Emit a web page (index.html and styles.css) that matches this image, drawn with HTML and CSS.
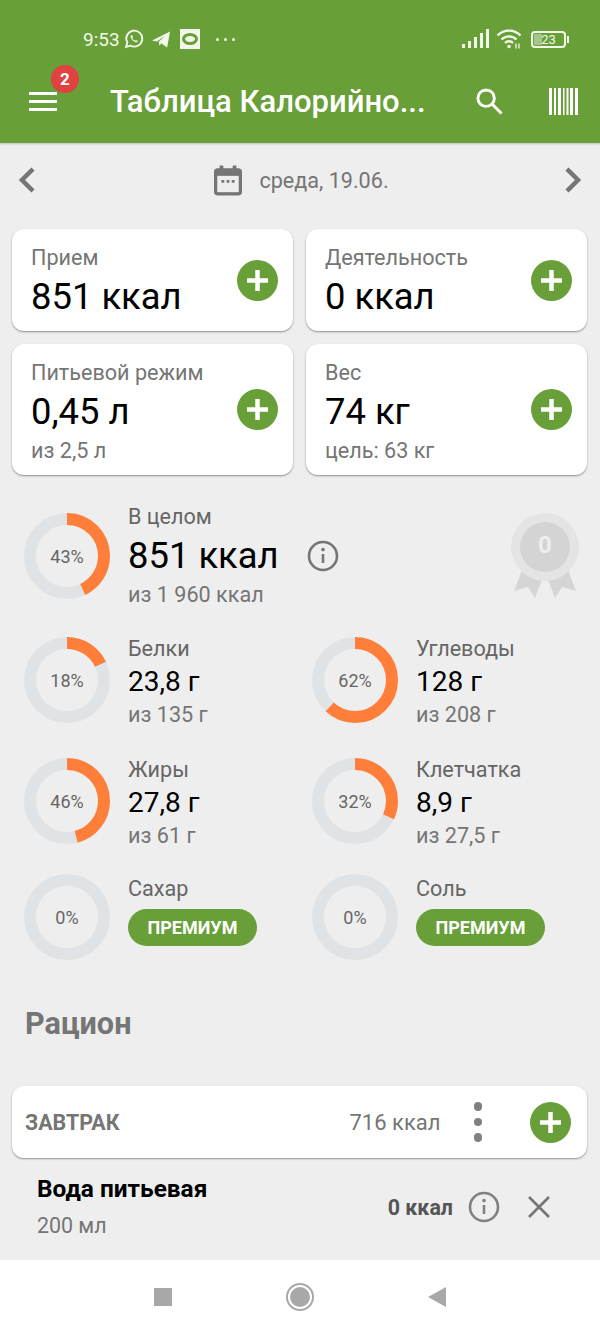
FILE: index.html
```html
<!DOCTYPE html>
<html lang="ru">

<head>
  <meta charset="utf-8">
  <title>Таблица Калорийности</title>
  <link rel="stylesheet" href="styles.css">
</head>

<body>
  <svg class="defs" width="0" height="0">
    <symbol id="plus" viewBox="0 0 41 41">
      <circle cx="20.5" cy="20.5" r="20.5" fill="#689f38" />
      <path d="M20.5 10v21M10 20.5h21" stroke="#fff" stroke-width="4.5" />
    </symbol>
    <symbol id="info" viewBox="0 0 32 32">
      <circle cx="16" cy="16" r="14" fill="none" stroke="currentColor" stroke-width="2.6" />
      <path d="M16 14v9" stroke="currentColor" stroke-width="2.6" />
      <circle cx="16" cy="9.6" r="1.8" fill="currentColor" />
    </symbol>
  </svg>

  <div class="screen">
    <header class="top">
      <div class="status">
        <span class="clock">9:53</span>
        <svg class="st-whatsapp" width="20" height="20" viewBox="0 0 24 24" fill="none" stroke="#f1f8e9" stroke-width="2.2">
          <path d="M2.5 21.5l1.5-5.2A9.6 9.6 0 1 1 7.8 20z" />
          <path d="M8.5 7.5c-1 1-.8 2.6.6 4.6s3.4 3.6 5.2 3.8c1.2.1 2-.6 2.2-1.6l-2.2-1.2-1 1c-1.400-.6-2.600-1.800-3.300-3.300l.9-1-1-2.400z" fill="#f1f8e9" stroke="none" />
        </svg>
        <svg class="st-telegram" width="19" height="17" viewBox="0 0 20 18">
          <path d="M0 10L19 .5 16 17.500 9.500 13 8 15.500 7 11.500 14 5 5 11z" fill="#f1f8e9" />
        </svg>
        <svg class="st-square" width="20" height="20" viewBox="0 0 20 20">
          <rect width="20" height="20" fill="#f1f8e9" />
          <ellipse cx="10" cy="10" rx="6.500" ry="4.500" fill="none" stroke="#689f38" stroke-width="3" />
        </svg>
        <span class="st-dots"><i></i><i></i><i></i></span>
        <span class="grow"></span>
        <svg width="27" height="20" viewBox="0 0 27 20" fill="#f1f8e9">
          <rect x="0" y="15" width="3" height="4" />
          <rect x="6" y="12" width="3" height="7" />
          <rect x="12" y="8" width="3" height="11" />
          <rect x="18" y="4" width="3" height="15" />
          <rect x="24" y="0" width="3" height="19" />
        </svg>
        <svg class="st-wifi" width="26" height="20" viewBox="0 0 26 20" fill="none" stroke="#f1f8e9" stroke-width="2.400">
          <path d="M1.500 6.500a16 16 0 0 1 23 0M5.500 10.500a10.500 10.500 0 0 1 15 0M9 14a5.500 5.500 0 0 1 8 0" />
          <circle cx="13" cy="17.500" r="1.800" fill="#f1f8e9" stroke="none" />
          <path d="M20 14.500v5M23 14.500v5" stroke-width="1.300" />
        </svg>
        <span class="battery"><span class="battery-fill"></span><span class="battery-num">23</span></span>
      </div>
      <div class="appbar">
        <button class="menu">
          <span class="menu-lines"><i></i><i></i><i></i></span>
          <span class="badge">2</span>
        </button>
        <h1 class="title">Таблица Калорийно...</h1>
        <svg class="search" width="27" height="27" viewBox="0 0 28 28" fill="none" stroke="#fff" stroke-width="3">
          <circle cx="10.500" cy="10.500" r="8.500" />
          <path d="M17 17l9.500 9.500" />
        </svg>
        <svg class="barcode" width="29" height="27" viewBox="0 0 29 27" fill="#fff">
          <rect x="0" width="3" height="27" />
          <rect x="5" width="2" height="27" />
          <rect x="9" width="3" height="27" />
          <rect x="14" width="1.500" height="27" />
          <rect x="17.500" width="2" height="27" />
          <rect x="21" width="3" height="27" />
          <rect x="26" width="3" height="27" />
        </svg>
      </div>
    </header>

    <main class="content">
      <div class="datebar">
        <svg width="18" height="28" viewBox="0 0 18 28" fill="none" stroke="#757575" stroke-width="4.500">
          <path d="M15 3L4 14l11 11" />
        </svg>
        <div class="date">
          <svg width="28" height="31" viewBox="0 0 30 32">
            <path d="M6 0h4v3h10V0h4v3h2a4 4 0 0 1 4 4v21a4 4 0 0 1-4 4H4a4 4 0 0 1-4-4V7a4 4 0 0 1 4-4h2z" fill="#757575" />
            <rect x="3.500" y="11" width="23" height="17.500" fill="#eee" />
            <path d="M8 15.500h3v3H8zM13.500 15.500h3v3h-3zM19 15.500h3v3h-3z" fill="#757575" />
          </svg>
          <span>среда, 19.06.</span>
        </div>
        <svg width="18" height="28" viewBox="0 0 18 28" fill="none" stroke="#757575" stroke-width="4.500">
          <path d="M3 3l11 11L3 25" />
        </svg>
      </div>

      <section class="cards">
        <div class="card card-short">
          <div class="card-text">
            <div class="card-label">Прием</div>
            <div class="card-value">851 ккал</div>
          </div>
          <svg class="add"><use href="#plus" /></svg>
        </div>
        <div class="card card-short">
          <div class="card-text">
            <div class="card-label">Деятельность</div>
            <div class="card-value">0 ккал</div>
          </div>
          <svg class="add"><use href="#plus" /></svg>
        </div>
        <div class="card card-tall">
          <div class="card-text">
            <div class="card-label">Питьевой режим</div>
            <div class="card-value">0,45 л</div>
            <div class="card-sub">из 2,5 л</div>
          </div>
          <svg class="add"><use href="#plus" /></svg>
        </div>
        <div class="card card-tall">
          <div class="card-text">
            <div class="card-label">Вес</div>
            <div class="card-value">74 кг</div>
            <div class="card-sub">цель: 63 кг</div>
          </div>
          <svg class="add"><use href="#plus" /></svg>
        </div>
      </section>

      <section class="total">
        <div class="ring">
          <svg viewBox="0 0 86 86"><circle class="ring-bg" cx="43" cy="43" r="37" /><circle class="ring-fg" cx="43" cy="43" r="37" pathLength="100" stroke-dasharray="43 100" /></svg>
          <span class="ring-num">43%</span>
        </div>
        <div class="total-text">
          <div class="total-label">В целом</div>
          <div class="total-value">851 ккал</div>
          <div class="macro-sub">из 1 960 ккал</div>
        </div>
        <svg class="total-info"><use href="#info" /></svg>
        <span class="grow"></span>
        <div class="medal">
          <svg width="70" height="86" viewBox="0 0 70 86">
            <path d="M14 52L4 78l14-4 7 11 9-23zM56 52l10 26-14-4-7 11-9-23z" fill="#d5d5d5" />
            <circle cx="35" cy="34" r="34" fill="#e4e4e4" />
            <circle cx="35" cy="34" r="25" fill="#d4d4d4" />
          </svg>
          <span class="medal-num">0</span>
        </div>
      </section>

      <section class="macros">
        <div class="macro">
          <div class="ring">
            <svg viewBox="0 0 86 86"><circle class="ring-bg" cx="43" cy="43" r="37" /><circle class="ring-fg" cx="43" cy="43" r="37" pathLength="100" stroke-dasharray="18 100" /></svg>
            <span class="ring-num">18%</span>
          </div>
          <div>
            <div class="macro-label">Белки</div>
            <div class="macro-value">23,8 г</div>
            <div class="macro-sub">из 135 г</div>
          </div>
        </div>
        <div class="macro">
          <div class="ring">
            <svg viewBox="0 0 86 86"><circle class="ring-bg" cx="43" cy="43" r="37" /><circle class="ring-fg" cx="43" cy="43" r="37" pathLength="100" stroke-dasharray="62 100" /></svg>
            <span class="ring-num">62%</span>
          </div>
          <div>
            <div class="macro-label">Углеводы</div>
            <div class="macro-value">128 г</div>
            <div class="macro-sub">из 208 г</div>
          </div>
        </div>
        <div class="macro">
          <div class="ring">
            <svg viewBox="0 0 86 86"><circle class="ring-bg" cx="43" cy="43" r="37" /><circle class="ring-fg" cx="43" cy="43" r="37" pathLength="100" stroke-dasharray="46 100" /></svg>
            <span class="ring-num">46%</span>
          </div>
          <div>
            <div class="macro-label">Жиры</div>
            <div class="macro-value">27,8 г</div>
            <div class="macro-sub">из 61 г</div>
          </div>
        </div>
        <div class="macro">
          <div class="ring">
            <svg viewBox="0 0 86 86"><circle class="ring-bg" cx="43" cy="43" r="37" /><circle class="ring-fg" cx="43" cy="43" r="37" pathLength="100" stroke-dasharray="32 100" /></svg>
            <span class="ring-num">32%</span>
          </div>
          <div>
            <div class="macro-label">Клетчатка</div>
            <div class="macro-value">8,9 г</div>
            <div class="macro-sub">из 27,5 г</div>
          </div>
        </div>
      </section>

      <section class="macros macros-locked">
        <div class="macro">
          <div class="ring">
            <svg viewBox="0 0 86 86"><circle class="ring-bg" cx="43" cy="43" r="37" /></svg>
            <span class="ring-num">0%</span>
          </div>
          <div class="locked-text">
            <div class="macro-label">Сахар</div>
            <div class="premium">ПРЕМИУМ</div>
          </div>
        </div>
        <div class="macro">
          <div class="ring">
            <svg viewBox="0 0 86 86"><circle class="ring-bg" cx="43" cy="43" r="37" /></svg>
            <span class="ring-num">0%</span>
          </div>
          <div class="locked-text">
            <div class="macro-label">Соль</div>
            <div class="premium">ПРЕМИУМ</div>
          </div>
        </div>
      </section>

      <h2 class="diet-title">Рацион</h2>

      <div class="meal">
        <span class="meal-name">ЗАВТРАК</span>
        <span class="grow"></span>
        <span class="meal-kcal">716 ккал</span>
        <span class="meal-more"><i></i><i></i><i></i></span>
        <svg class="add"><use href="#plus" /></svg>
      </div>

      <div class="food">
        <div>
          <div class="food-name">Вода питьевая</div>
          <div class="food-amount">200 мл</div>
        </div>
        <span class="grow"></span>
        <span class="food-kcal">0 ккал</span>
        <svg class="food-info"><use href="#info" /></svg>
        <svg class="food-close" width="22" height="22" viewBox="0 0 22 22" fill="none" stroke="#757575" stroke-width="2.600">
          <path d="M1 1l20 20M21 1L1 21" />
        </svg>
      </div>
    </main>

    <nav class="navbar">
      <span class="nav-square"></span>
      <span class="nav-circle"></span>
      <span class="nav-back"></span>
    </nav>
  </div>
</body>

</html>
```

FILE: styles.css
```css
html,
body {
  margin: 0;
  padding: 0;
}

body {
  font-family: 'Roboto', sans-serif;
  background: #eee;
  color: #757575;
}

.defs {
  position: absolute;
}

.grow {
  flex: 1;
}

.screen {
  display: flex;
  flex-direction: column;
  height: 1332px;
  overflow: hidden;
}

/* green top */
.top {
  height: 143px;
  box-sizing: border-box;
  background: #689f38;
  box-shadow: 0 1px 2px rgba(0, 0, 0, .2);
  padding-top: 27px;
  flex: none;
}

.status {
  display: flex;
  align-items: center;
  height: 24px;
  padding: 0 32px 0 83px;
  color: #f1f8e9;
  font-size: 19px;
}

.clock {
  margin-right: 4px;
}

.st-telegram {
  margin-left: 8px;
}

.st-square {
  margin-left: 9px;
}

.st-dots {
  display: flex;
  gap: 5px;
  margin-left: 16px;
}

.st-dots i {
  width: 3px;
  height: 3px;
  border-radius: 50%;
  background: #f1f8e9;
}

.st-wifi {
  margin-left: 7px;
}

.battery {
  position: relative;
  margin-left: 9px;
  margin-right: 2px;
  width: 35px;
  height: 17px;
  border: 2px solid #f1f8e9;
  border-radius: 4px;
  box-sizing: border-box;
  display: flex;
  align-items: center;
  justify-content: center;
}

.battery::after {
  content: "";
  position: absolute;
  right: -5px;
  top: 3px;
  width: 2px;
  height: 7px;
  background: #f1f8e9;
}

.battery-fill {
  position: absolute;
  left: 1px;
  top: 1px;
  bottom: 1px;
  width: 8px;
  background: #a5c58a;
}

.battery-num {
  position: relative;
  font-size: 13px;
}

.appbar {
  display: flex;
  align-items: center;
  height: 56px;
  margin-top: 22px;
  padding: 0 22px 0 29px;
}

.menu {
  position: relative;
  width: 28px;
  height: 19px;
  padding: 0;
  border: none;
  background: none;
  flex: none;
}

.menu-lines {
  display: flex;
  flex-direction: column;
  gap: 5px;
}

.menu-lines i {
  height: 3px;
  background: #fff;
}

.badge {
  position: absolute;
  left: 22px;
  top: -27px;
  width: 28px;
  height: 28px;
  border-radius: 50%;
  background: #e04141;
  color: #fff;
  font: 700 17px/28px 'Roboto', sans-serif;
  text-align: center;
}

.title {
  margin: 0 0 0 53px;
  flex: 1;
  font-size: 31px;
  font-weight: 500;
  color: #fff;
  white-space: nowrap;
}

.barcode {
  margin-left: 46px;
}

/* date row */
.content {
  flex: 1;
  overflow: hidden;
  padding: 0 12px;
}

.datebar {
  display: flex;
  align-items: center;
  justify-content: space-between;
  height: 74px;
  padding: 0 6px;
}

.date {
  display: flex;
  align-items: center;
  gap: 17px;
  font-size: 21.6px;
  margin-left: 3px;
}

.cards {
  display: grid;
  grid-template-columns: 281px 281px;
  column-gap: 13px;
  row-gap: 13px;
  margin-top: 12px;
}

.card {
  display: flex;
  align-items: center;
  justify-content: space-between;
  box-sizing: border-box;
  padding: 0 15px 0 19px;
  background: #fff;
  border-radius: 12px;
  box-shadow: 0 1px 2px rgba(0, 0, 0, .4);
}

.card-short {
  height: 102px;
}

.card-tall {
  height: 131px;
}

.card-text {
  padding-top: 5px;
}

.card-label {
  font-size: 21.6px;
  line-height: 28px;
}

.card-value {
  font-size: 36.4px;
  line-height: 50px;
  color: #000;
}

.card-sub {
  font-size: 21.6px;
  line-height: 28px;
}

.add {
  width: 41px;
  height: 41px;
  flex: none;
}

/* rings */
.total {
  display: flex;
  align-items: center;
  margin-top: 29px;
  padding: 0 8px 0 12px;
}

.ring {
  position: relative;
  width: 86px;
  height: 86px;
  flex: none;
  margin-right: 18px;
}

.ring svg {
  display: block;
  width: 86px;
  height: 86px;
  transform: rotate(-90deg);
}

.ring circle {
  fill: none;
  stroke-width: 12;
}

.ring-bg {
  stroke: #e0e3e6;
}

.ring-fg {
  stroke: #ff7e39;
}

.ring-num {
  position: absolute;
  left: 0;
  right: 0;
  top: 0;
  line-height: 88px;
  text-align: center;
  font-size: 18px;
  color: #666;
}

.total-label {
  font-size: 21.6px;
  line-height: 26px;
  color: #666;
}

.total-value {
  font-size: 36.4px;
  line-height: 52px;
  color: #000;
}

.total-text .macro-sub {
  line-height: 26px;
}

.macro-label {
  font-size: 21.6px;
  line-height: 24px;
  color: #666;
}

.macro-sub {
  font-size: 21.6px;
  line-height: 24px;
}

.total-info {
  width: 32px;
  height: 32px;
  margin-left: 28px;
  color: #757575;
}

.medal {
  position: relative;
  width: 70px;
  height: 86px;
}

.medal svg {
  display: block;
}

.medal-num {
  position: absolute;
  left: 0;
  right: 0;
  top: 18px;
  line-height: 28px;
  text-align: center;
  font-size: 24px;
  font-weight: 700;
  color: #eee;
}

.macros {
  display: grid;
  grid-template-columns: 288px 264px;
  row-gap: 31px;
  margin-top: 29px;
  padding-left: 12px;
}

.macros-locked {
  margin-top: 26px;
}

.macro {
  display: flex;
  align-items: flex-start;
}

.macro-value {
  font-size: 28px;
  line-height: 42px;
  color: #000;
}

.locked-text {
  padding-top: 3px;
}

.premium {
  width: 129px;
  height: 37px;
  margin-top: 8px;
  border-radius: 19px;
  background: #689f38;
  color: #fff;
  font-size: 18px;
  font-weight: 700;
  line-height: 37px;
  text-align: center;
}

/* diet */
.diet-title {
  margin: 46px 0 0 13px;
  font-size: 30.6px;
  font-weight: 700;
  line-height: 36px;
  color: #757575;
}

.meal {
  display: flex;
  align-items: center;
  height: 72px;
  box-sizing: border-box;
  margin: 44px 1px 0 0;
  padding: 0 16px 0 13px;
  background: #fff;
  border-radius: 12px;
  box-shadow: 0 1px 2px rgba(0, 0, 0, .4);
}

.meal-name {
  font-size: 21.4px;
  font-weight: 700;
  color: #757575;
}

.meal-kcal {
  font-size: 22px;
}

.meal-more {
  display: flex;
  flex-direction: column;
  gap: 7px;
  margin: 0 48px 0 33px;
}

.meal-more i {
  width: 8.500px;
  height: 8.500px;
  border-radius: 50%;
  background: #808080;
}

.food {
  display: flex;
  align-items: center;
  padding: 12px 38px 0 25px;
}

.food-name {
  font-size: 24.4px;
  font-weight: 700;
  line-height: 38px;
  color: #000;
}

.food-amount {
  font-size: 21.4px;
  line-height: 36px;
}

.food-kcal {
  font-size: 21.4px;
  font-weight: 700;
  color: #555;
}

.food-info {
  width: 32px;
  height: 32px;
  margin-left: 15px;
  color: #808080;
}

.food-close {
  margin-left: 28px;
}

/* system nav */
.navbar {
  display: flex;
  align-items: center;
  justify-content: center;
  box-sizing: border-box;
  height: 72px;
  padding-top: 2px;
  flex: none;
  background: #fff;
}

.nav-square {
  width: 18px;
  height: 18px;
  background: #a8a8a8;
}

.nav-circle {
  width: 20px;
  height: 20px;
  margin: 0 118px;
  border-radius: 50%;
  background: #a8a8a8;
  box-shadow: 0 0 0 2px #fff, 0 0 0 4px #a8a8a8;
}

.nav-back {
  width: 0;
  height: 0;
  border-style: solid;
  border-width: 10px 18px 10px 0;
  border-color: transparent #a8a8a8 transparent transparent;
}
```
